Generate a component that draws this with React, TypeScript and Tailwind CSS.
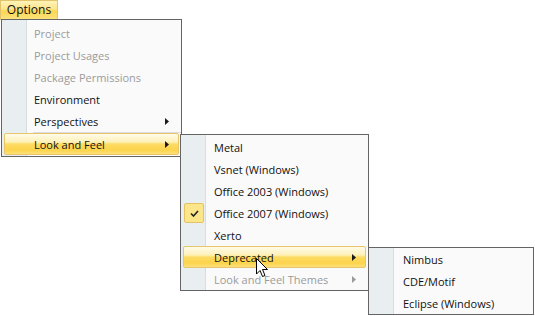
import React from 'react'

type Item = { label: string; disabled?: boolean; sub?: boolean; active?: boolean; checked?: boolean; sepBefore?: boolean }

const menu1: Item[] = [
  { label: 'Project', disabled: true },
  { label: 'Project Usages', disabled: true },
  { label: 'Package Permissions', disabled: true },
  { label: 'Environment' },
  { label: 'Perspectives', sub: true },
  { label: 'Look and Feel', sub: true, active: true, sepBefore: true },
]

const menu2: Item[] = [
  { label: 'Metal' },
  { label: 'Vsnet (Windows)' },
  { label: 'Office 2003 (Windows)' },
  { label: 'Office 2007 (Windows)', checked: true },
  { label: 'Xerto' },
  { label: 'Deprecated', sub: true, active: true },
  { label: 'Look and Feel Themes', sub: true, disabled: true },
]

const menu3: Item[] = [{ label: 'Nimbus' }, { label: 'CDE/Motif' }, { label: 'Eclipse (Windows)' }]

const hl = 'bg-[linear-gradient(to_bottom,#fffbe8_0%,#fef1b8_40%,#fddc64_50%,#fcd44c_80%,#fde07a_100%)] border border-[#e7c56a] rounded-[2px]'

function Arrow({ gray }: { gray?: boolean }) {
  return (
    <svg width="4" height="7" viewBox="0 0 4 7" className="shrink-0">
      <path d="M0 0 L4 3.5 L0 7 Z" fill={gray ? '#9a9a9a' : '#1a1a1a'} />
    </svg>
  )
}

function Menu({ items, lead, className }: { items: Item[]; lead: number; className: string }) {
  return (
    <div className={`absolute border border-[#646464] bg-[#fafafa] px-[2px] ${className}`}>
      <div className="absolute top-0 bottom-0 left-0 w-[25px] bg-[#e9eef0] border-r border-[#d8dde0]" />
      {items.map((it) => (
        <React.Fragment key={it.label}>
          {it.sepBefore && <div className="relative h-[1px] ml-[29px] -mr-[2px] bg-[#dcdcdc]" />}
          <div className={`relative flex items-center h-[22px] pr-[9px] ${it.active ? hl : 'border border-transparent'}`}>
            <div className="flex items-center shrink-0" style={{ width: lead }}>
              {it.checked && (
                <div className="w-[20px] h-[20px] flex items-center justify-center bg-[#fde58a] border border-[#e5c365] rounded-[2px]">
                  <svg width="9" height="7" viewBox="0 0 9 7">
                    <path d="M1 3.5 L3.5 6 L8 1" stroke="#222" strokeWidth="1.6" fill="none" />
                  </svg>
                </div>
              )}
            </div>
            <span className={`flex-1 whitespace-nowrap ${it.disabled ? 'text-[#9b9b9b]' : 'text-[#111]'}`}>{it.label}</span>
            {it.sub && <Arrow gray={it.disabled} />}
          </div>
        </React.Fragment>
      ))}
    </div>
  )
}

export default function App() {
  return (
    <div className="relative w-[535px] h-[316px] bg-white overflow-hidden text-[11px] leading-none" style={{ fontFamily: '"Open Sans", "Liberation Sans", sans-serif' }}>
      <div className="absolute left-0 top-0 h-[20px] w-[58px] flex items-center justify-center border border-[#e2c46c] bg-[linear-gradient(to_bottom,#fff3b8_0%,#fde58a_45%,#fcd552_55%,#fde27c_100%)] text-[12px] text-[#111]">
        Options
      </div>
      <Menu items={menu1} lead={29} className="left-[1px] top-[19px] w-[181px] pt-[2px] pb-[1px]" />
      <Menu items={menu2} lead={30} className="left-[180px] top-[134px] w-[189px] pt-[1px]" />
      <Menu items={menu3} lead={31} className="left-[368px] top-[247px] w-[166px]" />
      <svg className="absolute left-[256px] top-[258px]" width="13" height="20" viewBox="0 0 13 20">
        <path d="M0.5 0.5 L0.5 16 L4 12.5 L6.5 18.5 L9 17.5 L6.5 11.5 L11.5 11.5 Z" fill="#fff" stroke="#000" strokeWidth="1" />
      </svg>
    </div>
  )
}
